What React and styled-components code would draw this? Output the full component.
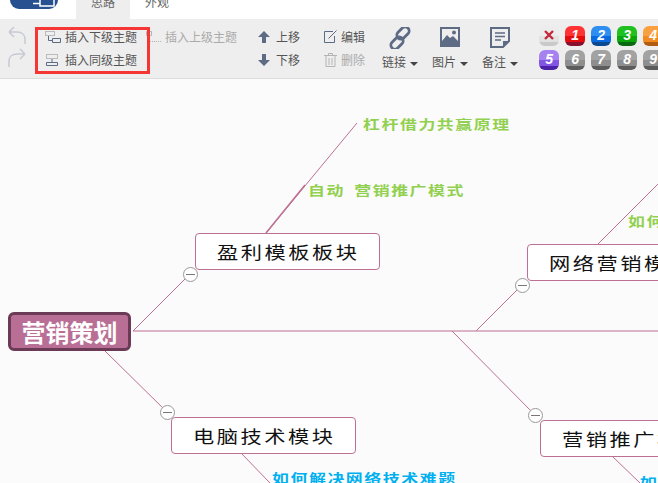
import React from "react";
import styled, { createGlobalStyle } from "styled-components";

const GlobalStyle = createGlobalStyle`
  html, body {
    margin: 0;
    padding: 0;
    height: 100%;
    overflow: hidden;
    background: #fff;
  }
  #root {
    height: 100%;
  }
`;

const Page = styled.div`
  width: 658px;
  height: 483px;
  display: flex;
  flex-direction: column;
  overflow: hidden;
  font-family: "Liberation Sans", "Noto Sans CJK SC", sans-serif;
`;

const Header = styled.header`
  height: 19px;
  flex: none;
  display: flex;
  background: #fff;
  overflow: hidden;
`;

const Logo = styled.div`
  width: 48px;
  height: 9px;
  margin-left: 10px;
  display: flex;
  justify-content: flex-end;
  padding-right: 3px;
  box-sizing: border-box;
  background: #26508f;
  border-radius: 0 0 13px 13px;
`;

const Tab = styled.div`
  width: 54px;
  margin-left: ${(p) => p.$gap}px;
  text-align: center;
  font-size: 12px;
  line-height: 6px;
  color: #666;
  background: ${(p) => (p.$active ? "#eee" : "transparent")};
`;

const Toolbar = styled.div`
  position: relative;
  height: 60px;
  flex: none;
  box-sizing: border-box;
  display: flex;
  padding: 6px 0 0 8px;
  background: #eee;
  border-bottom: 1px solid #ddd;
  overflow: hidden;
  white-space: nowrap;
`;

const Column = styled.div`
  display: grid;
  grid-auto-rows: 23px;
  margin-left: ${(p) => p.$gap || 0}px;
`;

const Action = styled.div`
  display: flex;
  align-items: center;
  gap: ${(p) => p.$gap}px;
  font-size: 12px;
  color: ${(p) => (p.$disabled ? "#aaa" : "#555")};
`;

const Divider = styled.div`
  width: 1px;
  height: 48px;
  margin: 0 ${(p) => p.$right}px 0 ${(p) => p.$left}px;
  background: #e8e8e8;
`;

const BigButton = styled.div`
  width: 36px;
  margin-left: ${(p) => p.$gap}px;
  display: flex;
  flex-direction: column;
  align-items: center;
  font-size: 12px;
  color: #555;
`;

const BigIcon = styled.div`
  height: 27px;
  margin-top: 2px;
`;

const BigLabel = styled.div`
  display: flex;
  align-items: center;
  gap: 4px;
  line-height: 17px;
  margin-top: 1px;
`;

const Caret = styled.span`
  width: 0;
  height: 0;
  border-left: 4px solid transparent;
  border-right: 4px solid transparent;
  border-top: 4px solid #444;
`;

const BadgeGrid = styled.div`
  display: grid;
  grid-template-columns: repeat(5, 20px);
  grid-auto-rows: 20px;
  column-gap: 6px;
  row-gap: 4px;
  margin-top: 1px;
`;

const Badge = styled.div`
  box-sizing: border-box;
  display: flex;
  align-items: center;
  justify-content: center;
  padding-bottom: 2px;
  border-radius: 6px;
  background: linear-gradient(
    ${(p) => p.$light} 0,
    ${(p) => p.$light} 48%,
    ${(p) => p.$base} 50%,
    ${(p) => p.$base} 82%,
    ${(p) => p.$dark} 82%
  );
  color: #fff;
  font: italic bold 14px "Liberation Sans", sans-serif;
`;

const Highlight = styled.div`
  position: absolute;
  left: 35px;
  top: 8px;
  width: 115px;
  height: 47px;
  box-sizing: border-box;
  border: 3px solid #f63535;
`;

const Canvas = styled.main`
  position: relative;
  flex: 1;
  background: #fbfbfb;
  overflow: hidden;
`;

const Wires = styled.svg`
  position: absolute;
  left: 0;
  top: 0;
`;

const RootNode = styled.div`
  position: absolute;
  left: 8px;
  top: 233px;
  width: 123px;
  height: 39px;
  box-sizing: border-box;
  display: flex;
  align-items: center;
  justify-content: center;
  background: #b96f95;
  border: 3px solid #6a3a56;
  border-radius: 6px;
  color: #fff;
  font: bold 24px "Noto Sans CJK SC", sans-serif;
`;

const TopicNode = styled.div`
  position: absolute;
  left: ${(p) => p.$x}px;
  top: ${(p) => p.$y}px;
  width: ${(p) => p.$w || 185}px;
  height: 37px;
  box-sizing: border-box;
  display: flex;
  align-items: center;
  padding-left: 21px;
  background: #fff;
  border: 1px solid #bb7094;
  border-radius: 4px;
  white-space: nowrap;
`;

const TopicText = styled.span`
  display: inline-block;
  font: 400 17px "Noto Sans CJK SC", sans-serif;
  letter-spacing: 2px;
  color: #111;
  transform: scaleX(1.25);
  transform-origin: left center;
`;

const LeafText = styled.span`
  position: absolute;
  left: ${(p) => p.$x}px;
  top: ${(p) => p.$y}px;
  font: 700 13px/16px "Noto Sans CJK SC", sans-serif;
  letter-spacing: 1.2px;
  word-spacing: 3px;
  color: ${(p) => p.$color};
  white-space: nowrap;
  transform: scaleX(1.3);
  transform-origin: left center;
`;

const Collapse = styled.div`
  position: absolute;
  left: ${(p) => p.$x - 7}px;
  top: ${(p) => p.$y - 7}px;
  width: 13px;
  height: 13px;
  border: 1px solid #999;
  border-radius: 50%;
  background: #fff;
  &::after {
    content: "";
    position: absolute;
    left: 2px;
    right: 2px;
    top: 6px;
    height: 1px;
    background: #777;
  }
`;

const LogoMark = () => (
  <svg width="22" height="9" viewBox="0 0 22 9" fill="none" stroke="#fff" strokeWidth="1.500">
    <path d="M0 3.500h7M7 0v6h14V0" />
  </svg>
);

const UndoIcon = ({ flip }) => (
  <svg width="18" height="20" viewBox="0 0 18 20" fill="none" stroke="#c6cad4" strokeWidth="1.500">
    {flip ? (
      <path d="M17 6 12 1M17 6l-5 5M17 6H9C4 6 1 9 1 13v6" />
    ) : (
      <path d="M1 7l5-5M1 7l5 5M1 7h8c5 0 8 3 8 7v5" />
    )}
  </svg>
);

const InsertChildIcon = () => (
  <svg width="16" height="14" viewBox="0 0 16 14" fill="none">
    <path d="M.5 1.500h9v4h-9z" stroke="#888" strokeDasharray="1 1" />
    <path d="M3.500 6v4.500H7" stroke="#5d6b85" />
    <path d="M7.500 8.500h8v4h-8z" stroke="#5d6b85" />
  </svg>
);

const InsertSiblingIcon = () => (
  <svg width="16" height="14" viewBox="0 0 16 14" fill="none">
    <path d="M1.500 1.500h11v4h-11z" stroke="#888" strokeDasharray="1 1" />
    <path d="M7 6v3" stroke="#5d6b85" />
    <path d="M1.500 9.500h11v3h-11z" stroke="#5d6b85" />
  </svg>
);

const InsertParentIcon = () => (
  <svg width="15" height="14" viewBox="0 0 15 14" fill="none" stroke="#b4b4b4">
    <path d="M.5 1.500h5v4h-5zM2.500 6v5.500H5" />
    <path d="M6 11.500h9" strokeDasharray="1 1" />
  </svg>
);

const ArrowIcon = ({ down }) => (
  <svg width="12" height="12" viewBox="0 0 12 12" fill="#5d6b85">
    <path d={down ? "M4 0h4v6h4L6 12 0 6h4z" : "M6 0l6 6H8v6H4V6H0z"} />
  </svg>
);

const EditIcon = () => (
  <svg width="13" height="13" viewBox="0 0 13 13" fill="none" stroke="#5d6b85">
    <path d="M9 1.500H.5v11h10V6" />
    <path d="M4.500 8.500l8-8" />
  </svg>
);

const TrashIcon = () => (
  <svg width="13" height="14" viewBox="0 0 13 14" fill="none" stroke="#b4b4b4">
    <path d="M0 2.500h13M4.500 2.500V.5h4v2M2 3v10.500h9V3M5 5v7M8 5v7" />
  </svg>
);

const LinkIcon = () => (
  <svg width="22" height="22" viewBox="0 0 22 22" fill="none" stroke="#5d6b85" strokeWidth="2.800">
    <rect x="10" y="-1" width="8" height="14" rx="4" transform="rotate(45 14 6)" />
    <rect x="4" y="9" width="8" height="14" rx="4" transform="rotate(45 8 16)" />
  </svg>
);

const ImageIcon = () => (
  <svg width="20" height="20" viewBox="0 0 20 20">
    <path d="M0 0h20v20H0z" fill="#5d6b85" />
    <path d="M2 2h16v13H2z" fill="#eee" />
    <path d="M2 14l5-6 3 3 3-2 5 5v1H2z" fill="#5d6b85" />
    <circle cx="14" cy="5.500" r="2" fill="#5d6b85" />
  </svg>
);

const NoteIcon = () => (
  <svg width="20" height="21" viewBox="0 0 20 21" fill="none" stroke="#5d6b85">
    <path d="M1 1h18v13l-6 6H1z" strokeWidth="2" />
    <path d="M5 6h10M5 9.500h10M5 13h6" strokeWidth="1.500" />
    <path d="M19 14h-6v6z" fill="#5d6b85" stroke="none" />
  </svg>
);

const CloseMark = () => (
  <svg width="10" height="10" viewBox="0 0 10 10" fill="none" stroke="#c2293a" strokeWidth="2.400">
    <path d="M1 1l8 8M9 1l-8 8" />
  </svg>
);

const grey = { light: "#a2a2a2", base: "#8e8e8e", dark: "#5c5c5c" };

const badges = [
  { id: "none", light: "#ececec", base: "#e2e2e2", dark: "#c9c9c9" },
  { id: "1", light: "#f33", base: "#e40d0d", dark: "#86102e" },
  { id: "2", light: "#2f8ff0", base: "#0a6be0", dark: "#0b4a92" },
  { id: "3", light: "#1fc01f", base: "#0aa60a", dark: "#0a6a12" },
  { id: "4", light: "#f9a040", base: "#f28a22", dark: "#b05c12" },
  { id: "5", light: "#a582f0", base: "#8255e2", dark: "#4b22a6" },
  { id: "6", ...grey },
  { id: "7", ...grey },
  { id: "8", ...grey },
  { id: "9", ...grey },
];

// canvas coordinates: page y minus 79
const wires = [
  [133, 252, 658, 252],
  [133, 252, 190, 195],
  [105, 272, 167, 333],
  [476, 252, 522, 206],
  [452, 252, 535, 336],
  [266, 154, 357, 44],
  [598, 165, 658, 105],
  [241, 374, 270, 404],
  [612, 377, 640, 404],
];

const thickWires = [
  [266, 154, 305, 106],
];

const topics = [
  { x: 195, y: 154, text: "盈利模板板块" },
  { x: 171, y: 338, text: "电脑技术模块" },
  { x: 527, y: 165, text: "网络营销模块" },
  { x: 540, y: 341, text: "营销推广模块" },
];

const leaves = [
  { x: 363, y: 37, color: "#92d050", text: "杠杆借力共赢原理" },
  { x: 308, y: 103, color: "#92d050", text: "自动 营销推广模式" },
  { x: 628, y: 134, color: "#92d050", text: "如何" },
  { x: 272, y: 391, color: "#00b0f0", text: "如何解决网络技术难题" },
  { x: 640, y: 395, color: "#00b0f0", text: "如何" },
];

const collapsers = [
  [190, 195],
  [167, 333],
  [522, 206],
  [535, 336],
];

const App = () => {
  return (
    <Page>
      <GlobalStyle />
      <Header>
        <Logo><LogoMark /></Logo>
        <Tab $gap={18} $active>思路</Tab>
        <Tab $gap={0}>外观</Tab>
      </Header>

      <Toolbar>
        <Column>
          <UndoIcon />
          <UndoIcon flip />
        </Column>

        <Column $gap={19}>
          <Action $gap={4}><InsertChildIcon />插入下级主题</Action>
          <Action $gap={4}><InsertSiblingIcon />插入同级主题</Action>
        </Column>

        <Column $gap={9}>
          <Action $gap={4} $disabled><InsertParentIcon />插入上级主题</Action>
        </Column>

        <Divider $left={8} $right={13} />

        <Column>
          <Action $gap={6}><ArrowIcon />上移</Action>
          <Action $gap={6}><ArrowIcon down />下移</Action>
        </Column>

        <Divider $left={9} $right={15} />

        <Column>
          <Action $gap={4}><EditIcon />编辑</Action>
          <Action $gap={4} $disabled><TrashIcon />删除</Action>
        </Column>

        <Divider $left={9} $right={0} />

        <BigButton $gap={8}>
          <BigIcon><LinkIcon /></BigIcon>
          <BigLabel>链接<Caret /></BigLabel>
        </BigButton>
        <BigButton $gap={14}>
          <BigIcon><ImageIcon /></BigIcon>
          <BigLabel>图片<Caret /></BigLabel>
        </BigButton>
        <BigButton $gap={14}>
          <BigIcon><NoteIcon /></BigIcon>
          <BigLabel>备注<Caret /></BigLabel>
        </BigButton>

        <Divider $left={7} $right={14} />

        <BadgeGrid>
          {badges.map((b) => (
            <Badge key={b.id} $light={b.light} $base={b.base} $dark={b.dark}>
              {b.id === "none" ? <CloseMark /> : b.id}
            </Badge>
          ))}
        </BadgeGrid>

        <Highlight />
      </Toolbar>

      <Canvas>
        <Wires width="658" height="404">
          {wires.map(([x1, y1, x2, y2]) => (
            <line key={`${x1}-${y1}-${x2}`} x1={x1} y1={y1} x2={x2} y2={y2} stroke="#bb7094" strokeWidth="1" />
          ))}
          {thickWires.map(([x1, y1, x2, y2]) => (
            <line key={`${x1}-${y1}`} x1={x1} y1={y1} x2={x2} y2={y2} stroke="#bb7094" strokeWidth="1.500" />
          ))}
        </Wires>

        <RootNode>营销策划</RootNode>

        {topics.map((t) => (
          <TopicNode key={t.text} $x={t.x} $y={t.y}>
            <TopicText>{t.text}</TopicText>
          </TopicNode>
        ))}

        {leaves.map((l) => (
          <LeafText key={l.text + l.x} $x={l.x} $y={l.y} $color={l.color}>{l.text}</LeafText>
        ))}

        {collapsers.map(([x, y]) => (
          <Collapse key={`${x}-${y}`} $x={x} $y={y} />
        ))}
      </Canvas>
    </Page>
  );
};

export default App;
